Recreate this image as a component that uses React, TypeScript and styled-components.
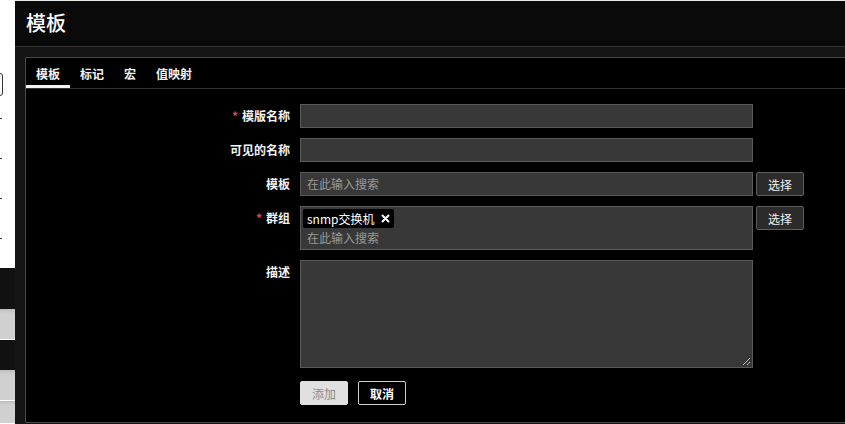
import React from 'react'
import styled, {createGlobalStyle} from 'styled-components'

const GlobalStyle = createGlobalStyle`
    html, body {
      margin: 0;
      padding: 0;
      background: #141414;
      font-family: "Noto Sans CJK SC", "Noto Sans", "Liberation Sans", sans-serif;
      font-size: 12px;
      color: #f2f2f2;
    }
    * {
      box-sizing: border-box;
    }
`

const Page = styled.div`
    display: flex;
    width: 845px;
    height: 424px;
    overflow: hidden;
`

const Sidebar = styled.div`
    width: 15px;
    flex: none;
    display: flex;
    flex-direction: column;
    background: #fff;
    position: relative;
`

const SideWhite = styled.div`
    height: 268px;
    position: relative;
    background: #fff;
`

const SideTick = styled.div<{ $top: number }>`
    position: absolute;
    left: 0;
    top: ${p => p.$top}px;
    width: 2px;
    height: 1px;
    background: #333;
`

const SideBox = styled.div`
    position: absolute;
    left: -8px;
    top: 73px;
    width: 11px;
    height: 23px;
    border: 1px solid #333;
    border-radius: 3px;
`

const SideBlock = styled.div<{ $h: number; $light?: boolean }>`
    height: ${p => p.$h}px;
    background: ${p => (p.$light ? 'linear-gradient(#bdbdbd, #d0d0d0 4px)' : '#111')};
    border-bottom: ${p => (p.$light ? '1px solid #fff' : 'none')};
`

const Main = styled.div`
    flex: 1;
    display: flex;
    flex-direction: column;
    min-width: 0;
`

const Header = styled.div`
    height: 47px;
    flex: none;
    display: flex;
    align-items: center;
    padding: 0 11px;
    background: #0a0a0a;
    border-top: 1px solid #e8e8e8;
    border-bottom: 1px solid #333;
`

const Title = styled.h1`
    margin: 0;
    font-size: 20px;
    font-weight: 500;
    color: #fff;
    line-height: 1;
    margin-top: -2px;
`

const Content = styled.div`
    flex: 1;
    padding: 10px 0 1px 10px;
    background: #141414;
`

const Panel = styled.div`
    height: 366px;
    background: #000;
    border: 1px solid #4a4a4a;
    border-right: none;
`

const Tabs = styled.div`
    display: flex;
    height: 31px;
    border-bottom: 1px solid #333;
`

const Tab = styled.div<{ $active?: boolean }>`
    padding: 0 10px;
    display: flex;
    align-items: center;
    font-weight: bold;
    color: #f2f2f2;
    border-bottom: 3px solid ${p => (p.$active ? '#f2f2f2' : 'transparent')};
    padding-top: 3px;
`

const Form = styled.div`
    display: grid;
    grid-template-columns: 264px 453px auto;
    column-gap: 10px;
    row-gap: 10px;
    margin-top: 15px;
    align-items: start;
`

const Label = styled.div`
    text-align: right;
    line-height: 24px;
    font-weight: bold;
    color: #f2f2f2;
`

const Star = styled.span`
    color: #e54545;
    margin-right: 4px;
`

const Input = styled.div<{ $h?: number }>`
    height: ${p => p.$h ?? 24}px;
    background: #383838;
    border: 1px solid #5a5a5a;
    padding: 0 6px;
    line-height: 22px;
    color: #9a9a9a;
    position: relative;
`

const Side = styled.div`
    margin-left: -7px;
`

const Button = styled.div`
    width: 48px;
    height: 24px;
    display: flex;
    align-items: center;
    justify-content: center;
    background: #2b2b2b;
    border: 1px solid #5d5d5d;
    border-radius: 2px;
    color: #f2f2f2;
`

const MultiSelect = styled.div`
    height: 44px;
    background: #383838;
    border: 1px solid #5a5a5a;
    padding: 2px 2px 0;
`

const Tag = styled.span`
    display: inline-flex;
    align-items: center;
    height: 19px;
    padding: 0 4px;
    background: #000;
    border-radius: 2px;
    color: #fff;
    font-size: 12px;
    gap: 6px;
`

const Placeholder = styled.div`
    padding-left: 4px;
    line-height: 20px;
    color: #9a9a9a;
`

const Grip = styled.svg`
    position: absolute;
    right: 1px;
    bottom: 1px;
`

const Actions = styled.div`
    display: flex;
    gap: 10px;
    margin-top: 3px;
`

const AddButton = styled(Button)`
    background: #e0e0e0;
    border-color: #e0e0e0;
    color: #8a8a8a;
`

const CancelButton = styled(Button)`
    background: #000;
    border-color: #d0d0d0;
    font-weight: bold;
    color: #fff;
`

const Empty = styled.div``

const App: React.FC = () => {
    return (
        <>
            <GlobalStyle/>
            <Page>
                <Sidebar>
                    <SideWhite>
                        <SideBox/>
                        <SideTick $top={118}/>
                        <SideTick $top={158}/>
                        <SideTick $top={198}/>
                        <SideTick $top={238}/>
                    </SideWhite>
                    <SideBlock $h={41}/>
                    <SideBlock $h={31} $light/>
                    <SideBlock $h={30}/>
                    <SideBlock $h={31} $light/>
                    <SideBlock $h={23} $light/>
                </Sidebar>
                <Main>
                    <Header>
                        <Title>模板</Title>
                    </Header>
                    <Content>
                        <Panel>
                            <Tabs>
                                <Tab $active>模板</Tab>
                                <Tab>标记</Tab>
                                <Tab>宏</Tab>
                                <Tab>值映射</Tab>
                            </Tabs>
                            <Form>
                                <Label><Star>*</Star>模版名称</Label>
                                <Input/>
                                <Empty/>

                                <Label>可见的名称</Label>
                                <Input/>
                                <Empty/>

                                <Label>模板</Label>
                                <Input>在此输入搜索</Input>
                                <Side><Button>选择</Button></Side>

                                <Label><Star>*</Star>群组</Label>
                                <MultiSelect>
                                    <Tag>
                                        snmp交换机
                                        <svg width='9' height='9' viewBox='0 0 9 9'>
                                            <path d='M1.5 1.5L7.5 7.5M7.5 1.5L1.5 7.5' stroke='#fff' strokeWidth='2'
                                                  strokeLinecap='round'/>
                                        </svg>
                                    </Tag>
                                    <Placeholder>在此输入搜索</Placeholder>
                                </MultiSelect>
                                <Side><Button>选择</Button></Side>

                                <Label>描述</Label>
                                <Input $h={108}>
                                    <Grip width='9' height='9' viewBox='0 0 9 9'>
                                        <path d='M8 1L1 8M8 5L5 8' stroke='#bbb' strokeWidth='1'/>
                                    </Grip>
                                </Input>
                                <Empty/>

                                <Empty/>
                                <Actions>
                                    <AddButton>添加</AddButton>
                                    <CancelButton>取消</CancelButton>
                                </Actions>
                                <Empty/>
                            </Form>
                        </Panel>
                    </Content>
                </Main>
            </Page>
        </>
    )
}

export default App
